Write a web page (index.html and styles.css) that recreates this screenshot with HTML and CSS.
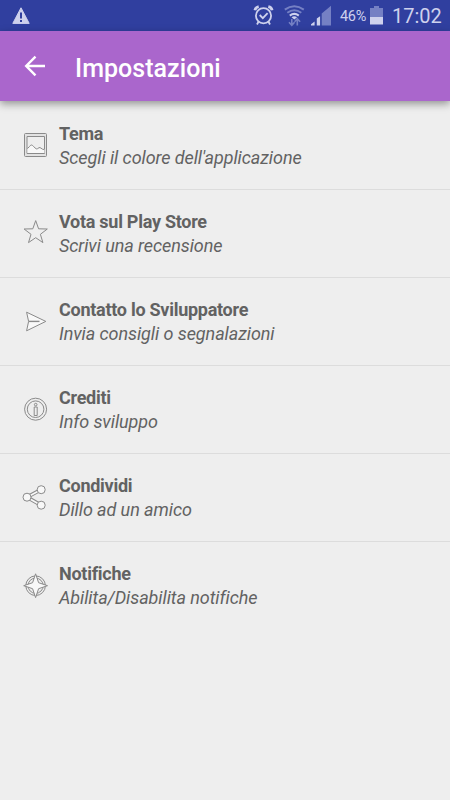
FILE: index.html
```html
<!DOCTYPE html>
<html lang="it">
<head>
    <meta charset="UTF-8">
    <title>Impostazioni</title>
    <link rel="stylesheet" href="styles.css">
</head>
<body>
    <div class="status">
        <svg class="warn" width="20" height="20" viewBox="0 0 20 20">
            <path fill="#ced1ed" stroke="#ced1ed" stroke-linejoin="round" d="M10 1.8L18.2 17.4H1.8z"/>
            <path stroke="#303f9f" stroke-width="2" d="M10 6.5v6M10 14v2"/>
        </svg>
        <svg class="signals" width="82" height="31" viewBox="0 0 82 31">
            <g fill="none" stroke="#ced1ed" stroke-width="1.8">
                <circle cx="13.5" cy="15.8" r="7.6"/>
                <path d="M9.7 15l3.1 3.1 4.8-5M8.5 21.8l-1.5 2.7M18.5 21.8l1.5 2.7"/>
                <path stroke-width="2.8" d="M4.9 10.2q.6-2.8 3.8-3.5M22.1 10.2q-.6-2.8-3.8-3.5"/>
            </g>
            <g fill="none" stroke-width="2">
                <path stroke="#7580c4" d="M34.8 9.6q9.5-6.8 19 0"/>
                <path stroke="#7580c4" d="M37.3 12.8q7-5 14 0"/>
                <path stroke="#ced1ed" d="M39.8 15.6q4.5-3.4 9 0"/>
            </g>
            <path fill="#ced1ed" d="M41.5 17.2q2.8-2 5.6 0l-2.8 2.4z"/>
            <path fill="none" stroke="#7580c4" stroke-width="1.6" d="M41.8 19v6M39 22.3l2.8 3 2.8-3M47.3 25.5v-6M44.6 21.7l2.7-3 2.8 3"/>
            <path fill="#7580c4" d="M71.7 13.5L81 5.8V25.5h-9.3z"/>
            <path fill="#ced1ed" d="M61 25.5v-1.2l3.6-2.8v4zM66.8 25.5v-7l3.3-2.3v9.3z"/>
        </svg>
        <span class="percent">46%</span>
        <svg class="battery" width="13" height="31" viewBox="0 0 13 31">
            <path fill="#7580c4" d="M0 8h4V6h5v2h4v9H0z"/>
            <path fill="#ced1ed" d="M0 17h13v7.5H0z"/>
        </svg>
        <span class="time">17:02</span>
    </div>
    <div class="toolbar">
        <svg class="back" width="22" height="22" viewBox="0 0 22 22">
            <path fill="none" stroke="#fff" stroke-width="2.4" d="M21 11H2.5M11.5 1.7L2.2 11l9.3 9.3"/>
        </svg>
        <h1 class="title">Impostazioni</h1>
    </div>
    <ul class="list">
        <li class="item">
            <svg class="icon" viewBox="0 0 30 30">
                <rect x="4.5" y="3.5" width="22" height="23" rx="1" fill="#e2e2e2"/>
                <rect x="7" y="6.5" width="17.5" height="17" fill="#eee"/>
                <path class="solid" stroke="none" d="M7.5 19l4.5-4 5 4 3-1.5 4.5 2V23H7.5z"/>
                <path d="M7.5 18.5l2-2q1-1.5 2-1.5t2 1.5l2.5 2.2q.8.5 1.5 0l1.5-1q1-.5 2 .5l1.5 1 1.5.3"/>
            </svg>
            <div class="text">
                <div class="name">Tema</div>
                <div class="desc">Scegli il colore dell'applicazione</div>
            </div>
        </li>
        <li class="item">
            <svg class="icon" viewBox="0 0 30 30">
                <path d="M15.7 2.6l2.9 8.2 8.7.2-6.9 5.3 2.5 8.3-7.2-4.9-7.2 4.9L11 16.3 4.1 11l8.7-.2z"/>
            </svg>
            <div class="text">
                <div class="name">Vota sul Play Store</div>
                <div class="desc">Scrivi una recensione</div>
            </div>
        </li>
        <li class="item">
            <svg class="icon" viewBox="0 0 30 30">
                <path class="solid" d="M6.6 6.2l19.2 9.2L6.6 24.8l2-9.4z"/>
                <path stroke-width="1.4" d="M8.8 15.4h10.7"/>
            </svg>
            <div class="text">
                <div class="name">Contatto lo Sviluppatore</div>
                <div class="desc">Invia consigli o segnalazioni</div>
            </div>
        </li>
        <li class="item">
            <svg class="icon" viewBox="0 0 30 30">
                <circle cx="15.6" cy="15.2" r="11"/>
                <circle cx="15.6" cy="15.2" r="8.3"/>
                <rect x="14.2" y="13" width="3" height="8.5"/>
                <circle cx="15.7" cy="10.6" r="1.3"/>
            </svg>
            <div class="text">
                <div class="name">Crediti</div>
                <div class="desc">Info sviluppo</div>
            </div>
        </li>
        <li class="item">
            <svg class="icon" viewBox="0 0 30 30">
                <path stroke-width="3.8" d="M21 7.7L7 15.2l14 8"/>
                <path class="core" stroke-width="1.6" d="M21 7.7L7 15.2l14 8"/>
                <circle class="solid" cx="21.2" cy="7.7" r="4"/>
                <circle class="solid" cx="7" cy="15.2" r="4"/>
                <circle class="solid" cx="21.2" cy="23.2" r="4"/>
            </svg>
            <div class="text">
                <div class="name">Condividi</div>
                <div class="desc">Dillo ad un amico</div>
            </div>
        </li>
        <li class="item">
            <svg class="icon" viewBox="0 0 30 30">
                <circle cx="15.6" cy="15.7" r="9.8"/>
                <circle cx="15.6" cy="15.7" r="7.6"/>
                <path class="solid" d="M15.6 3.8l3 8.9 8.9 3-8.9 3-3 8.9-3-8.9-8.9-3 8.9-3z"/>
            </svg>
            <div class="text">
                <div class="name">Notifiche</div>
                <div class="desc">Abilita/Disabilita notifiche</div>
            </div>
        </li>
    </ul>
</body>
</html>
```
FILE: styles.css
```css
body{
    margin: 0;
    background-color: #eee;
    font-family: Roboto, "Liberation Sans", sans-serif;
}
.status{
    height: 31px;
    display: flex;
    align-items: center;
    background-color: #303f9f;
    color: #ced1ed;
}
.warn{
    margin-left: 11px;
}
.signals{
    margin-left: 219px;
}
.percent{
    width: 28px;
    margin-left: 8px;
    font-size: 14.5px;
    letter-spacing: -.3px;
    line-height: 31px;
    padding-top: 2px;
    white-space: nowrap;
}
.battery{
    margin-left: 2px;
}
.time{
    margin-left: 9px;
    font-size: 20px;
    line-height: 31px;
    padding-top: 1px;
}
.toolbar{
    position: relative;
    height: 70px;
    display: flex;
    align-items: center;
    background-color: #aa66cc;
    box-shadow: 0 3px 8px rgba(0,0,0,.38);
}
.back{
    margin-left: 24px;
}
.title{
    margin: 4px 0 0 29px;
    font-size: 25px;
    font-weight: 500;
    letter-spacing: .05px;
    color: #fff;
}
.list{
    margin: 0;
    padding: 1px 0 0;
    list-style: none;
}
.item{
    box-sizing: border-box;
    height: 88px;
    display: flex;
    align-items: center;
    padding-left: 20px;
    border-bottom: 1px solid #dcdcdc;
}
.item:last-child{
    border-bottom-color: transparent;
}
.icon{
    width: 30px;
    height: 30px;
    margin-top: -2px;
    fill: none;
    stroke: #8a8a8a;
    stroke-width: 1;
    stroke-linejoin: round;
}
.solid{
    fill: #f8f8f8;
}
.core{
    stroke: #f8f8f8;
}
.text{
    margin-left: 9px;
    color: #626262;
    font-size: 18px;
    line-height: 24px;
}
.name{
    font-weight: 700;
    letter-spacing: -.27px;
}
.desc{
    font-style: italic;
    letter-spacing: -.08px;
}
```
